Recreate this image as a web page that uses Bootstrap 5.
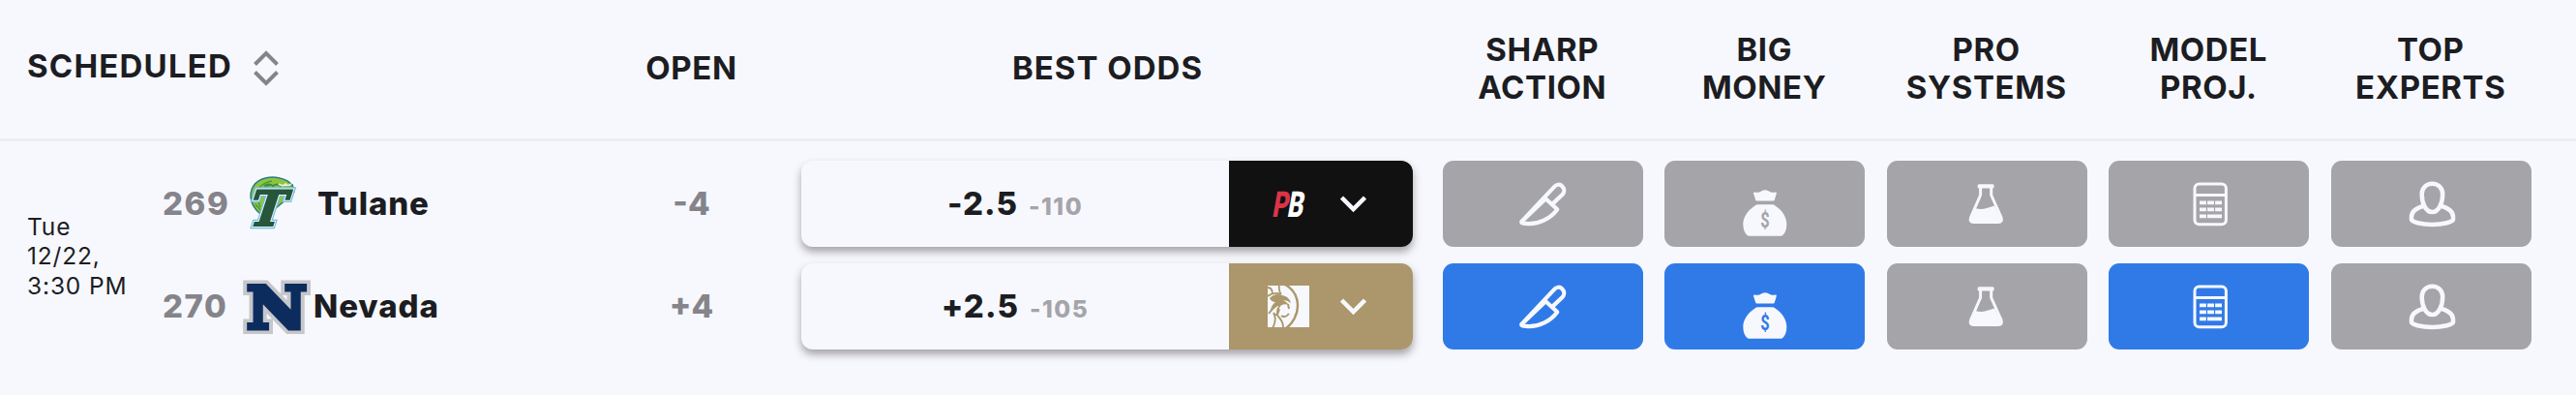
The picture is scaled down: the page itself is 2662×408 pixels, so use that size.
<!DOCTYPE html>
<html lang="en">
<head>
  <meta charset="UTF-8">
  <title>Best Odds</title>
  <meta name="viewport" content="width=device-width, initial-scale=1">
  <link href="https://cdn.jsdelivr.net/npm/bootstrap@5.3.0/dist/css/bootstrap.min.css" rel="stylesheet">
  <style>
    body { background: #f7f8fd; color: #1c1d22; font-family: Inter, "Liberation Sans", sans-serif; height: 408px; overflow: hidden; }
    .odds-grid { display: grid; grid-template-columns: 612px 205px 663px repeat(5, 229.5px) 1fr; }
    .odds-head { height: 146px; border-bottom: 3px solid #ecedf2; font-size: 33px; line-height: 39px; font-weight: 700; letter-spacing: .6px; padding-bottom: 2px; }
    .sched-head { padding-left: 28px; gap: 22px; }
    .sched-label { letter-spacing: 1.2px; padding-bottom: 5px; }
    .best-label { letter-spacing: 1px; padding-right: 8px; }
    .signal-head { padding-right: 2px; }
    .odds-body { padding-top: 20px; }
    .line-stack { display: grid; grid-template-rows: 89px 89px; row-gap: 17px; }
    .sched-cell { display: grid; grid-template-columns: 140px 1fr; padding-left: 28px; }
    .game-time { font-size: 24.5px; line-height: 30.3px; letter-spacing: .85px; padding-top: 53px; }
    .team-line { font-size: 33px; font-weight: 800; letter-spacing: .9px; }
    .rot-num { color: #85848a; width: 84px; letter-spacing: 1.5px; }
    .team-logo { width: 72px; height: 58px; overflow: visible; flex: none; }
    .open-line { font-size: 33px; font-weight: 800; color: #85848a; }
    .odds-pill { margin: 0 20px 0 11px; border-radius: 12px; box-shadow: 0 5px 9px rgba(28, 20, 24, .38); }
    .odds-quote { gap: 11px; }
    .odds-price { font-size: 33px; font-weight: 800; letter-spacing: 1px; }
    .odds-juice { font-size: 24.5px; font-weight: 800; color: #a5a4a9; letter-spacing: 1.5px; }
    .book { width: 190px; border-radius: 0 12px 12px 0; padding-left: 40px; gap: 32px; }
    .book-pb { background: #111; }
    .book-mgm { background: #ab976b; }
    .signal { --tile: #a5a4a9; background: var(--tile); border-radius: 11px; margin: 0 12px 0 10.7px; color: #f7f8fd; }
    .signal-on { --tile: #307ae8; }
    .signal svg { width: 48px; height: 48px; overflow: visible; }
  </style>
</head>
<body>
  <svg class="d-none">
    <symbol id="knife" viewBox="0 0 48 48" overflow="visible">
      <path d="M2.600 41.600 35.500 6.600C38.500 3 42 3 44.400 5.400C47 8 46.800 11.500 44.500 14L33.300 24.600M27.300 18.300 39.300 29.200C33 38 20.500 45.200 7 43.900Q.8 43.400 2.600 41.600Z" fill="none" stroke="currentColor" stroke-width="4.200" stroke-linejoin="round"/>
    </symbol>
    <symbol id="bag" viewBox="0 0 48 48" overflow="visible">
      <path d="M13 11.600Q16.500 12.300 19 11Q24 7.400 29 11Q31.500 12.300 35 11.600Q36 11.700 35.800 12.700L33.800 19.500Q33.400 20.500 32.500 20.500H15.500Q14.500 20.500 14.200 19.500L12 12.700Q11.900 11.600 13 11.600ZM16.500 24.200H31.500Q33 24.200 34.500 25.500C42 30.500 46.300 37.500 46.300 44.500C46.300 50 44.800 53.500 42.200 56Q41.500 56.700 40.500 56.700H7.300Q6.300 56.700 5.500 56C3 53.500 1.300 50 1.300 44.500C1.300 37.500 6 30.500 13.500 25.500Q15 24.200 16.500 24.200Z" fill="currentColor"/>
      <text x="19.200" y="48" font-family="Roboto" font-size="22" font-weight="700" textLength="9.400" lengthAdjust="spacingAndGlyphs" fill="var(--tile)">$</text>
    </symbol>
    <symbol id="flask" viewBox="0 0 48 48" overflow="visible">
      <rect x="14.600" y="3.200" width="17" height="4.200" rx="1.500" fill="currentColor"/>
      <path d="M17.600 6V14.500L7.600 37.500Q6 42.600 10.500 42.600H36Q40.600 42.600 39 37.500L28.700 14.500V6" fill="none" stroke="currentColor" stroke-width="3"/>
      <path d="M12.500 28.300Q19 29.500 23 28.300T32 25.500L39.500 40L37 43H9.500L7 40Z" fill="currentColor"/>
    </symbol>
    <symbol id="calc" viewBox="0 0 48 48" overflow="visible">
      <rect x="9" y="3" width="32.400" height="41.800" rx="4.500" fill="none" stroke="currentColor" stroke-width="3"/>
      <path d="M9 14.500H41.400" stroke="currentColor" stroke-width="3"/>
      <path d="M14 22.400H37M14 29.400H37" stroke="currentColor" stroke-width="3.800" stroke-dasharray="6.900 1.150"/>
      <path d="M14 36.400H20.900M22 36.400H37" stroke="currentColor" stroke-width="3.800"/>
    </symbol>
    <symbol id="expert" viewBox="0 0 48 48" overflow="visible">
      <path d="M25.400 2.700C19 2.700 14.700 7.500 14.700 13.500C14.700 22.500 18.500 32 25.400 32S36.200 22.500 36.200 13.500C36.200 7.500 32 2.700 25.400 2.700ZM17 25.500C8.500 28 4 32.200 4 37V40C4 42 14 44.900 25.400 44.900S47 42 47 40V37C47 32.200 42.500 28 34 25.500" fill="none" stroke="currentColor" stroke-width="4.500"/>
    </symbol>
    <symbol id="chevron" viewBox="0 0 27 18">
      <path d="M1.500 2 13.500 14 25.500 2" fill="none" stroke="#f7f8fd" stroke-width="4.500"/>
    </symbol>
  </svg>

  <div class="odds-grid odds-head text-center align-items-center">
    <div class="d-flex align-items-center sched-head">
      <span class="sched-label">SCHEDULED</span>
      <svg width="26" height="37" viewBox="0 0 26 37"><path d="M1.500 14.500 13 3 24.500 14.500M1.500 22.500 13 34 24.500 22.500" fill="none" stroke="#85848a" stroke-width="4"/></svg>
    </div>
    <div>OPEN</div>
    <div class="best-label">BEST ODDS</div>
    <div class="signal-head">SHARP<br>ACTION</div>
    <div class="signal-head">BIG<br>MONEY</div>
    <div class="signal-head">PRO<br>SYSTEMS</div>
    <div class="signal-head">MODEL<br>PROJ.</div>
    <div class="signal-head">TOP<br>EXPERTS</div>
  </div>

  <div class="odds-grid odds-body">
    <div class="sched-cell">
      <div class="game-time">Tue<br>12/22,<br>3:30 PM</div>
      <div class="line-stack">
        <div class="team-line d-flex align-items-center">
          <span class="rot-num">269</span>
          <svg class="team-logo" viewBox="0 0 72 58">
            <path d="M24 43C11 37 4.500 25 8 14C12 3 25-1 37 2C47 4 52 10 52 16L50 19L22 42Z" fill="#8cc63e" stroke="#2c7a86" stroke-width="1.500"/>
            <path d="M12 27C10 15 18 7 29 5M17 32C12 21 17 12 28 9M20 38L12 29" fill="none" stroke="#4f9b3a" stroke-width="1.600"/>
            <g transform="translate(1.500 50.500) skewX(-18)" font-family="DejaVu Serif" font-size="50" font-weight="700">
              <text textLength="38" lengthAdjust="spacingAndGlyphs" fill="#27563b" stroke="#74bfe6" stroke-width="6.500">T</text>
              <text textLength="38" lengthAdjust="spacingAndGlyphs" fill="#27563b" stroke="#e6f4fa" stroke-width="4">T</text>
              <text textLength="38" lengthAdjust="spacingAndGlyphs" fill="#27563b" stroke="#27563b" stroke-width="2">T</text>
            </g>
            <path d="M21 10Q26 7 30 10Q35 7 38 10Q43 7 46 10L51 9" fill="none" stroke="#3c8a48" stroke-width="2"/>
            <path d="M36 8Q40 11 43 8Q46 11 49 8" fill="none" stroke="#e8f2c4" stroke-width="1.800"/>
          </svg>
          <span class="ms-1">Tulane</span>
        </div>
        <div class="team-line d-flex align-items-center">
          <span class="rot-num">270</span>
          <svg class="team-logo" viewBox="0 0 72 58">
            <g font-family="DejaVu Serif" font-size="60.500" font-weight="700">
              <text x="3" y="51" textLength="63" lengthAdjust="spacingAndGlyphs" fill="#c6c7ca" stroke="#c6c7ca" stroke-width="12">N</text>
              <text x="3" y="51" textLength="63" lengthAdjust="spacingAndGlyphs" fill="#0d2c5e" stroke="#0d2c5e" stroke-width="5">N</text>
            </g>
          </svg>
          <span>Nevada</span>
        </div>
      </div>
    </div>

    <div class="line-stack open-line text-center align-items-center">
      <div>-4</div>
      <div>+4</div>
    </div>

    <div class="line-stack">
      <div class="odds-pill d-flex">
        <div class="odds-quote d-flex flex-fill align-items-baseline justify-content-center my-auto">
          <span class="odds-price">-2.5</span><span class="odds-juice">-110</span>
        </div>
        <div class="book book-pb d-flex align-items-center">
          <svg width="43" height="28" viewBox="0 0 43 28" overflow="visible">
            <g transform="translate(2 26.500) skewX(-10)" font-family="Roboto" font-size="37" font-weight="900">
              <text x="2" textLength="16.500" lengthAdjust="spacingAndGlyphs" fill="#dc3447">P</text>
              <text x="17.500" textLength="16.500" lengthAdjust="spacingAndGlyphs" fill="#fff">B</text>
            </g>
          </svg>
          <svg width="27" height="18"><use href="#chevron"/></svg>
        </div>
      </div>
      <div class="odds-pill d-flex">
        <div class="odds-quote d-flex flex-fill align-items-baseline justify-content-center my-auto">
          <span class="odds-price">+2.5</span><span class="odds-juice">-105</span>
        </div>
        <div class="book book-mgm d-flex align-items-center">
          <svg width="43" height="43" viewBox="0 0 43 43">
            <rect width="43" height="43" fill="#f7f8fd"/>
            <g fill="none" stroke="#ab976b">
              <path d="M18-1C27 4 31 12 31 21S26 39 19 44" stroke-width="2.500"/>
              <path d="M0 2Q5 2 5 9M12 0Q11 5 14 9M0 11Q6 6 14 9M1 29Q8 19 16 18M5 44Q10 35 6 28M6 28Q10 34 12 24M16 43Q16 37 11 32Q8 26 13 20" stroke-width="1.800"/>
              <path d="M14 31Q18 34 22 29M21 19L22 24" stroke-width="2"/>
            </g>
            <path d="M2 13Q8 7 15 10Q22 11 24 18Q20 15 16 15Q20 17 22 20Q16 18 13 21Q8 20 3 25Q4 20 8 17Q4 17 2 13Z" fill="#ab976b"/>
          </svg>
          <svg width="27" height="18"><use href="#chevron"/></svg>
        </div>
      </div>
    </div>

    <div class="line-stack">
      <div class="signal d-flex align-items-center justify-content-center"><svg><use href="#knife"/></svg></div>
      <div class="signal signal-on d-flex align-items-center justify-content-center"><svg><use href="#knife"/></svg></div>
    </div>
    <div class="line-stack">
      <div class="signal d-flex align-items-center justify-content-center"><svg><use href="#bag"/></svg></div>
      <div class="signal signal-on d-flex align-items-center justify-content-center"><svg><use href="#bag"/></svg></div>
    </div>
    <div class="line-stack">
      <div class="signal d-flex align-items-center justify-content-center"><svg><use href="#flask"/></svg></div>
      <div class="signal d-flex align-items-center justify-content-center"><svg><use href="#flask"/></svg></div>
    </div>
    <div class="line-stack">
      <div class="signal d-flex align-items-center justify-content-center"><svg><use href="#calc"/></svg></div>
      <div class="signal signal-on d-flex align-items-center justify-content-center"><svg><use href="#calc"/></svg></div>
    </div>
    <div class="line-stack">
      <div class="signal d-flex align-items-center justify-content-center"><svg><use href="#expert"/></svg></div>
      <div class="signal d-flex align-items-center justify-content-center"><svg><use href="#expert"/></svg></div>
    </div>
  </div>

  <script src="https://cdn.jsdelivr.net/npm/bootstrap@5.3.0/dist/js/bootstrap.bundle.min.js"></script>
</body>
</html>
